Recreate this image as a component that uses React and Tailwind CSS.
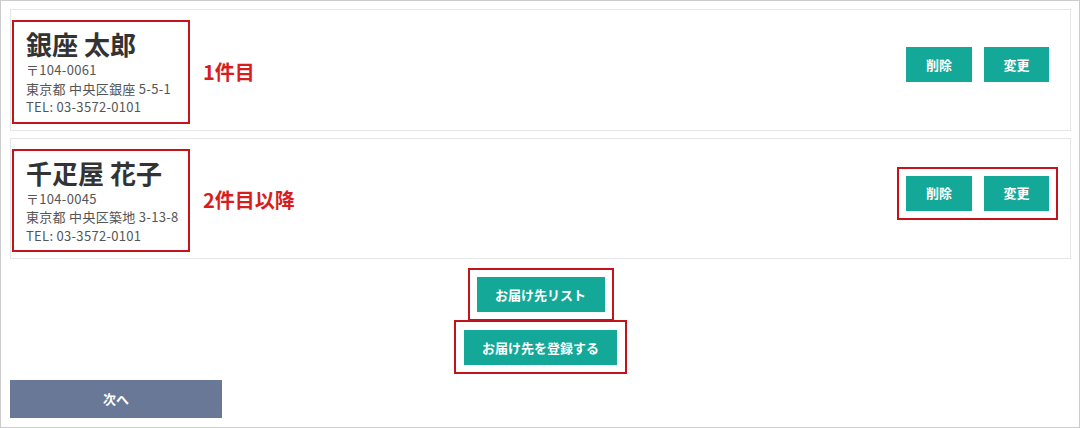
const addresses = [
  {
    name: "銀座 太郎",
    zip: "〒104-0061",
    addr: "東京都 中央区銀座 5-5-1",
    tel: "TEL: 03-3572-0101",
    label: "1件目",
    markButtons: false,
  },
  {
    name: "千疋屋 花子",
    zip: "〒104-0045",
    addr: "東京都 中央区築地 3-13-8",
    tel: "TEL: 03-3572-0101",
    label: "2件目以降",
    markButtons: true,
  },
];

const TealButton = ({ children, className = "" }) => (
  <button
    type="button"
    className={`h-[35px] bg-[#13a898] text-white text-[13px] font-bold ${className}`}
  >
    {children}
  </button>
);

const AddressCard = ({ item }) => (
  <div className="flex items-start border border-[#e6e6e6] px-[1px] pt-[10px] pb-[6px]">
    <div className="flex items-center">
      {/* annotated address block */}
      <div className="w-[178px] border-2 border-[#c4141b] pl-[12px] pt-[6px] pb-[5px]">
        <p className="text-[26px] leading-[31px] font-bold text-[#333]">
          {item.name}
        </p>
        <div className="mt-[2px] text-[13px] leading-[18.5px] tracking-[0.3px] text-[#555] whitespace-nowrap">
          <p>{item.zip}</p>
          <p>{item.addr}</p>
          <p>{item.tel}</p>
        </div>
      </div>
      <span className="ml-[13px] text-[20px] font-bold text-[#d71e1e]">
        {item.label}
      </span>
    </div>

    <div className="ml-auto">
      {item.markButtons ? (
        <div className="mt-[18px] mr-[11px] flex gap-[12px] border-2 border-[#c4141b] px-[7px] py-[7px]">
          <TealButton className="w-[66px]">削除</TealButton>
          <TealButton className="w-[65px]">変更</TealButton>
        </div>
      ) : (
        <div className="mt-[27px] mr-[20px] flex gap-[12px]">
          <TealButton className="w-[66px]">削除</TealButton>
          <TealButton className="w-[65px]">変更</TealButton>
        </div>
      )}
    </div>
  </div>
);

export default function App() {
  return (
    <div className="w-[1080px] h-[428px] border border-[#cccccc] bg-white pl-[9px] pr-[8px] pt-[8px] font-['Noto_Sans_CJK_JP',sans-serif]">
      <div className="flex flex-col gap-[7px]">
        {addresses.map((item) => (
          <AddressCard key={item.name} item={item} />
        ))}
      </div>

      <div className="mt-[9px] flex flex-col items-center">
        <div className="border-2 border-[#c4141b] p-[7px]">
          <TealButton className="w-[128px]">お届け先リスト</TealButton>
        </div>
        <div className="-mt-px border-2 border-[#c4141b] px-[8px] pt-[8px] pb-[7px]">
          <TealButton className="w-[153px]">お届け先を登録する</TealButton>
        </div>
      </div>

      <button
        type="button"
        className="mt-[6px] h-[38px] w-[212px] bg-[#687896] text-white text-[13px] font-bold"
      >
        次へ
      </button>
    </div>
  );
}
